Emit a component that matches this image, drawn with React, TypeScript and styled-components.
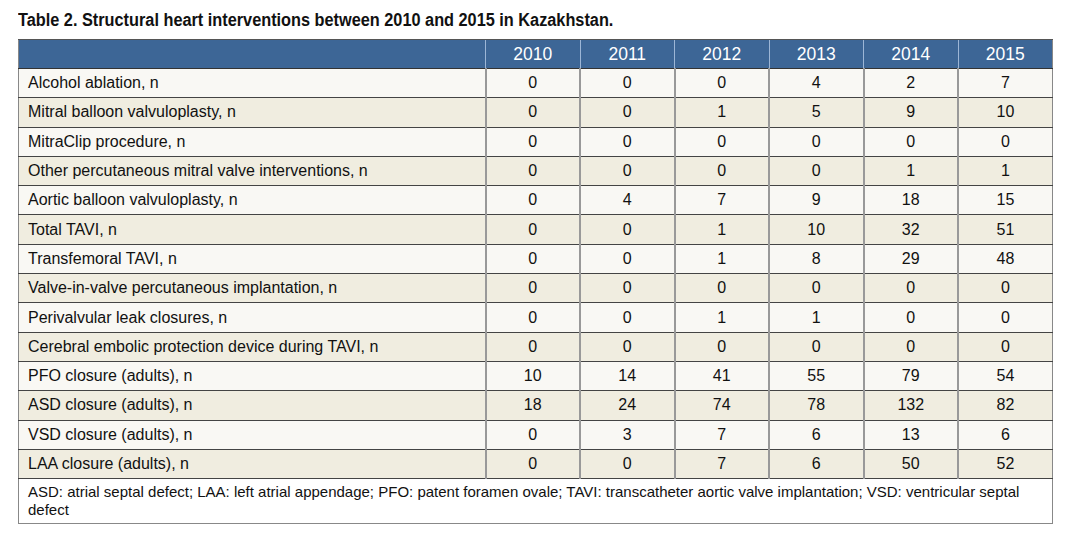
import React from "react";
import styled, { createGlobalStyle } from "styled-components";

const GlobalStyle = createGlobalStyle`
  html, body {
    margin: 0;
    padding: 0;
    background: #ffffff;
  }
`;

const Page = styled.div`
  padding: 10px 0 0 18px;
  width: 1035px;
  font-family: "Liberation Sans", Arial, sans-serif;
  color: #111;
`;

const Title = styled.h2`
  margin: 0 0 8px 0;
  font-family: "Liberation Sans", Arial, sans-serif;
  font-weight: bold;
  font-size: 18px;
  line-height: 21px;
  color: #111;
  white-space: nowrap;
  display: inline-block;
  transform: scaleX(0.905);
  transform-origin: left center;
`;

const Table = styled.table`
  width: 1035px;
  border-collapse: collapse;
  table-layout: fixed;
  border: 1px solid #888;
`;

const HeadCell = styled.th<{ $first?: boolean }>`
  background: #3d6696;
  color: #fff;
  font-weight: normal;
  font-size: 17.5px;
  height: 28px;
  padding: 0;
  text-align: center;
  border-top: 1px solid #555;
  border-bottom: 1px solid #333;
  border-left: 1px solid ${(p) => (p.$first ? "#888" : "#9db6d6")};
`;

const Row = styled.tr<{ $alt: boolean }>`
  background: ${(p) => (p.$alt ? "#f0ede0" : "#f9f8f4")};
`;

const LabelCell = styled.td`
  font-size: 16px;
  height: 28.3px;
  padding: 0 0 0 9px;
  border-bottom: 1px solid #444;
  border-left: 1px solid #888;
  white-space: nowrap;
`;

const NumCell = styled.td`
  font-size: 16px;
  text-align: center;
  padding: 0;
  border-bottom: 1px solid #444;
  border-left: 2px solid #999;
`;

const NoteCell = styled.td`
  background: #fff;
  font-size: 15px;
  line-height: 18px;
  padding: 4px 8px 4px 9px;
  border-top: 1px solid #444;
`;

const years = ["2010", "2011", "2012", "2013", "2014", "2015"];

const rows: [string, number[]][] = [
  ["Alcohol ablation, n", [0, 0, 0, 4, 2, 7]],
  ["Mitral balloon valvuloplasty, n", [0, 0, 1, 5, 9, 10]],
  ["MitraClip procedure, n", [0, 0, 0, 0, 0, 0]],
  ["Other percutaneous mitral valve interventions, n", [0, 0, 0, 0, 1, 1]],
  ["Aortic balloon valvuloplasty, n", [0, 4, 7, 9, 18, 15]],
  ["Total TAVI, n", [0, 0, 1, 10, 32, 51]],
  ["Transfemoral TAVI, n", [0, 0, 1, 8, 29, 48]],
  ["Valve-in-valve percutaneous implantation, n", [0, 0, 0, 0, 0, 0]],
  ["Perivalvular leak closures, n", [0, 0, 1, 1, 0, 0]],
  ["Cerebral embolic protection device during TAVI, n", [0, 0, 0, 0, 0, 0]],
  ["PFO closure (adults), n", [10, 14, 41, 55, 79, 54]],
  ["ASD closure (adults), n", [18, 24, 74, 78, 132, 82]],
  ["VSD closure (adults), n", [0, 3, 7, 6, 13, 6]],
  ["LAA closure (adults), n", [0, 0, 7, 6, 50, 52]],
];

export default function App() {
  return (
    <Page>
      <GlobalStyle />
      <Title>Table 2. Structural heart interventions between 2010 and 2015 in Kazakhstan.</Title>
      <Table>
        <colgroup>
          <col style={{ width: 467 }} />
          {years.map((y) => (
            <col key={y} />
          ))}
        </colgroup>
        <thead>
          <tr>
            <HeadCell $first />
            {years.map((y) => (
              <HeadCell key={y}>{y}</HeadCell>
            ))}
          </tr>
        </thead>
        <tbody>
          {rows.map(([label, vals], i) => (
            <Row key={label} $alt={i % 2 === 1}>
              <LabelCell>{label}</LabelCell>
              {vals.map((v, j) => (
                <NumCell key={j}>{v}</NumCell>
              ))}
            </Row>
          ))}
          <tr>
            <NoteCell colSpan={7}>
              ASD: atrial septal defect; LAA: left atrial appendage; PFO: patent foramen ovale; TAVI: transcatheter
              aortic valve implantation; VSD: ventricular septal defect
            </NoteCell>
          </tr>
        </tbody>
      </Table>
    </Page>
  );
}
